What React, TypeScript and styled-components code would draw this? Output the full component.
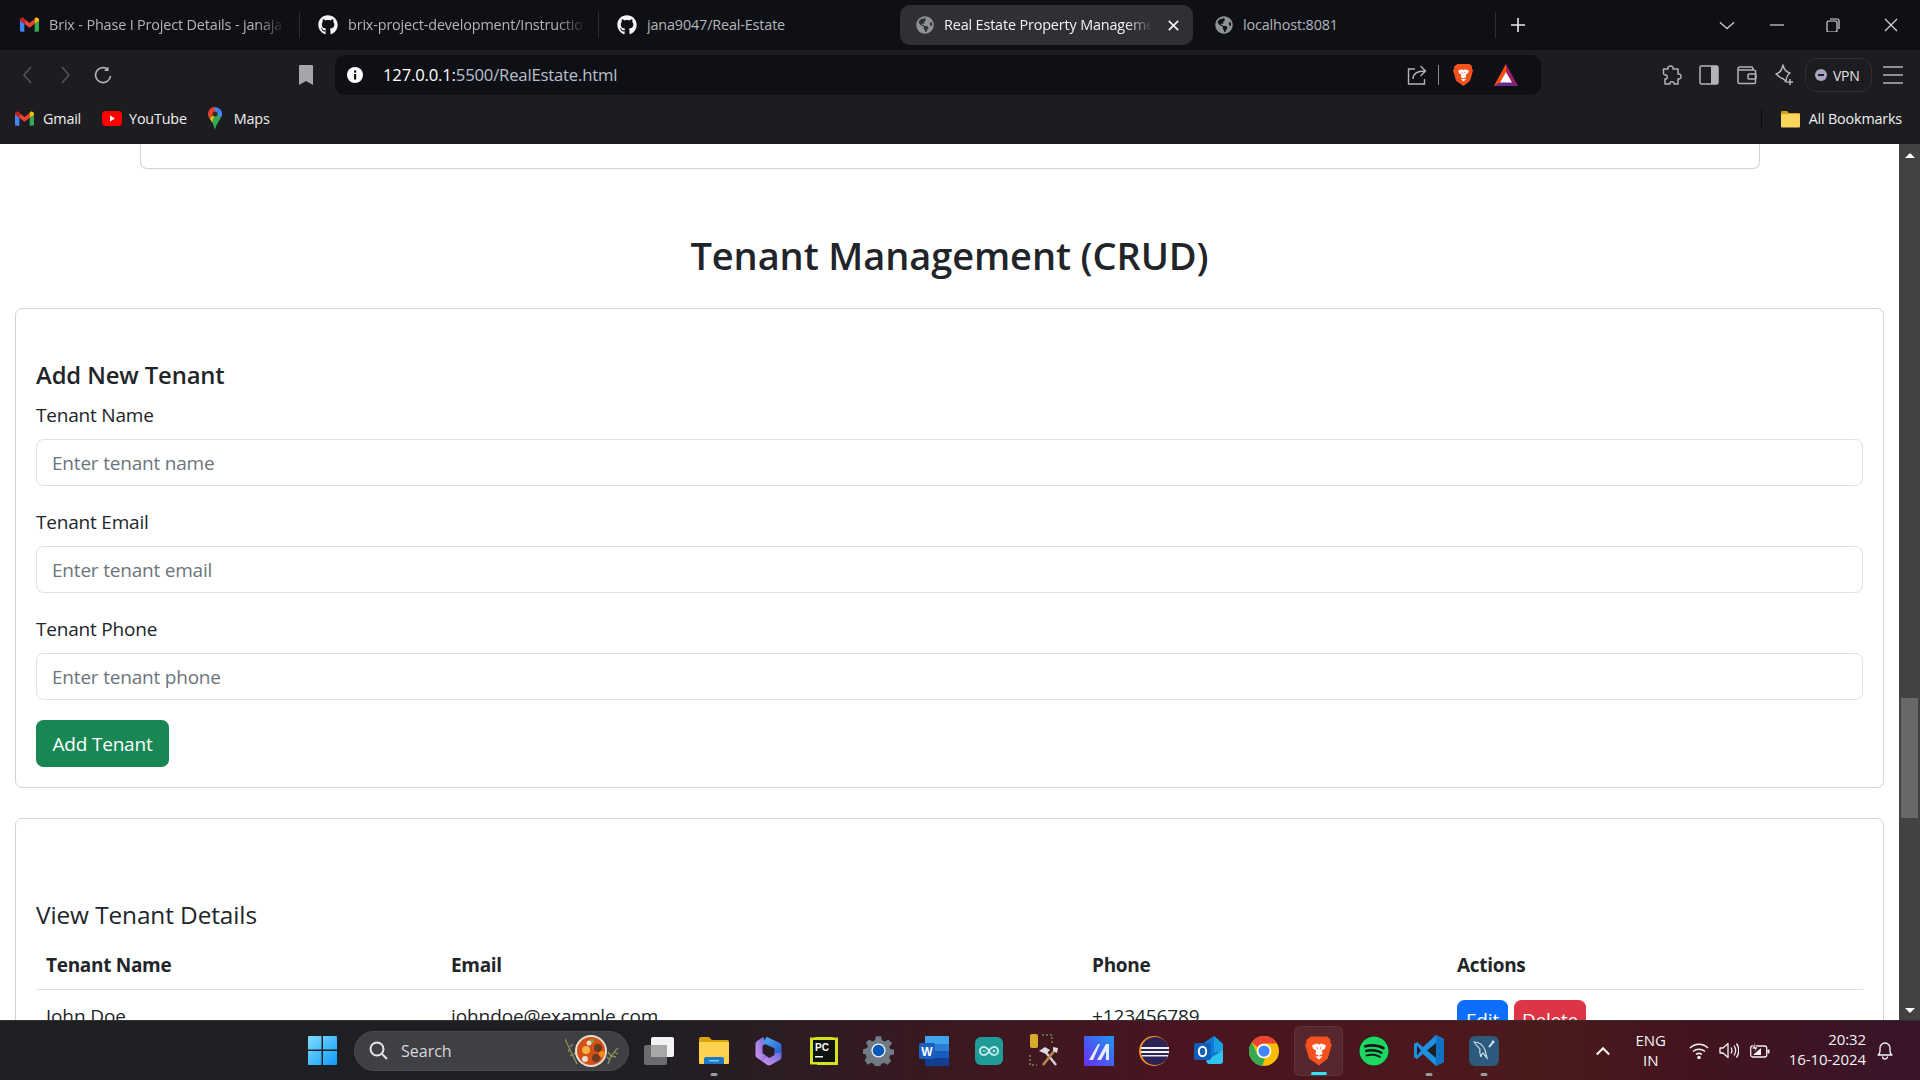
import React from "react";
import styled, { createGlobalStyle } from "styled-components";
import { FaGithub, FaGlobeAmericas, FaSpotify } from "react-icons/fa";
import { SiArduino } from "react-icons/si";

const UI_FONT = `"Open Sans", "Noto Sans", "Liberation Sans", sans-serif`;

const GlobalStyle = createGlobalStyle`
  * { box-sizing: border-box; }
  html, body { margin: 0; padding: 0; background: #fff; }
  body { font-family: ${UI_FONT}; overflow: hidden; }
`;

const Frame = styled.div`
  width: 1920px;
  height: 1080px;
  display: flex;
  flex-direction: column;
  overflow: hidden;
`;

/* browser chrome */
const TabStrip = styled.div`
  height: 50px;
  flex: none;
  background: #0f1015;
  display: flex;
  align-items: center;
  padding-left: 2px;
`;

const Tab = styled.div<{ $w: number; $active?: boolean; $divider?: boolean; $pad?: number }>`
  width: ${(p) => p.$w}px;
  height: ${(p) => (p.$active ? 40 : 26)}px;
  display: flex;
  align-items: center;
  gap: 10px;
  padding-left: ${(p) => p.$pad ?? 18}px;
  background: ${(p) => (p.$active ? "#2f2f34" : "transparent")};
  border-radius: ${(p) => (p.$active ? "10px" : "0")};
  border-right: ${(p) => (p.$divider ? "1px solid #2c2d31" : "none")};
  color: ${(p) => (p.$active ? "#f2f2f3" : "#b4b5b9")};
`;

const TabTitle = styled.span<{ $w: number; $fade?: boolean }>`
  width: ${(p) => p.$w}px;
  overflow: hidden;
  white-space: nowrap;
  font-size: 14.4px;
  line-height: 20px;
  margin-top: -1px;
  letter-spacing: -0.15px;
  ${(p) => (p.$fade ? "mask-image: linear-gradient(to right, #000 88%, transparent 100%);" : "")}
`;

const TabClose = styled.span`
  margin-left: 6px;
  display: flex;
  color: #f0f0f0;
`;

const NewTab = styled.div`
  margin-left: 15px;
  display: flex;
  color: #e8e8e8;
`;

const WindowControls = styled.div`
  margin-left: auto;
  display: flex;
  align-items: center;
  color: #d8d8d8;
`;

const WinButton = styled.div<{ $ml: number }>`
  margin-left: ${(p) => p.$ml}px;
  display: flex;
`;

const Toolbar = styled.div`
  height: 45px;
  flex: none;
  background: #1c1c21;
  display: flex;
  align-items: flex-end;
  color: #c0c0c4;
`;

const NavButton = styled.div<{ $ml: number }>`
  height: 40px;
  margin-left: ${(p) => p.$ml}px;
  display: flex;
  align-items: center;
`;

const AddressBar = styled.div`
  width: 1206px;
  height: 40px;
  margin-left: 22px;
  background: #0f1015;
  border-radius: 10px;
  display: flex;
  align-items: center;
  padding-left: 12px;
`;

const Url = styled.span`
  margin-left: 20px;
  margin-top: -1px;
  font-size: 16.7px;
  letter-spacing: -0.2px;
  color: #b9c0cc;
`;

const UrlHost = styled.span`
  color: #fff;
`;

const AddressActions = styled.div`
  margin-left: auto;
  display: flex;
  align-items: center;
  padding-right: 23px;
`;

const AddressDivider = styled.span`
  width: 1px;
  height: 20px;
  background: #8a8a8e;
  margin: 0 14px 0 11px;
`;

const VpnPill = styled.div`
  width: 67px;
  height: 34px;
  margin-left: 11px;
  margin-bottom: 3px;
  border: 1px solid #2f3036;
  border-radius: 12px;
  display: flex;
  align-items: center;
  gap: 6px;
  padding-left: 9px;
  font-size: 14px;
  letter-spacing: -0.3px;
  color: #e2e2e4;
`;

const VpnDot = styled.span`
  width: 12px;
  height: 12px;
  border-radius: 50%;
  background: #a3a6bd;
  display: flex;
  align-items: center;
  justify-content: center;
  &::after {
    content: "";
    width: 6px;
    height: 2px;
    background: #1c1c21;
  }
`;

const BookmarkBar = styled.div`
  height: 49px;
  flex: none;
  background: #1c1c21;
  display: flex;
  align-items: center;
  padding-bottom: 2px;
  color: #f0f0f0;
  font-size: 14.4px;
  letter-spacing: -0.2px;
`;

const Bookmark = styled.div<{ $ml: number; $gap: number }>`
  margin-left: ${(p) => p.$ml}px;
  display: flex;
  align-items: center;
  gap: ${(p) => p.$gap}px;
`;

const BookmarkDivider = styled.span`
  width: 1px;
  height: 20px;
  background: #0c0c0f;
  margin-left: auto;
`;

const BookmarkLabel = styled.span`
  margin-right: 18px;
`;

/* page */
const Viewport = styled.div`
  flex: 1;
  min-height: 0;
  display: flex;
  background: #fff;
  overflow: hidden;
`;

const PageContent = styled.main`
  width: 1899px;
  flex: none;
  overflow: hidden;
  color: #212529;
  font-size: 19px;
  letter-spacing: -0.2px;
`;

const PrevCard = styled.div`
  width: 1620px;
  height: 25px;
  margin-left: 140px;
  border: 1px solid #d3d3d3;
  border-top: none;
  border-radius: 0 0 7px 7px;
`;

const PageTitle = styled.h2`
  margin: 62px 0 29px;
  font-size: 38px;
  line-height: 48px;
  font-weight: 600;
  letter-spacing: -0.1px;
  text-align: center;
`;

const Card = styled.section<{ $mt?: number }>`
  margin: ${(p) => p.$mt ?? 0}px 15px 0;
  padding: 51px 20px 20px;
  border: 1px solid #d3d3d3;
  border-radius: 7px;
`;

const CardHeading = styled.h4<{ $weight: number; $size: number; $mt?: number; $mb: number }>`
  margin: ${(p) => p.$mt ?? 0}px 0 ${(p) => p.$mb}px;
  font-size: ${(p) => p.$size}px;
  line-height: 30px;
  font-weight: ${(p) => p.$weight};
  letter-spacing: -0.1px;
`;

const Field = styled.div`
  margin-bottom: 21px;
  &:last-of-type {
    margin-bottom: 20px;
  }
`;

const FieldLabel = styled.label`
  display: block;
  line-height: 30px;
  margin-bottom: 9px;
`;

const TextInput = styled.input`
  display: block;
  width: 100%;
  height: 47px;
  padding: 1px 15px 0;
  border: 1px solid #dee2e6;
  border-radius: 7.5px;
  font: inherit;
  letter-spacing: -0.2px;
  color: #212529;
  &::placeholder {
    color: #6c757d;
    opacity: 1;
  }
`;

const ActionButton = styled.button<{ $bg: string; $w: number; $h: number }>`
  width: ${(p) => p.$w}px;
  height: ${(p) => p.$h}px;
  padding: 1px 0 0;
  background: ${(p) => p.$bg};
  color: #fff;
  border: none;
  border-radius: 7.5px;
  font: inherit;
  letter-spacing: -0.2px;
`;

const TenantTable = styled.table`
  width: 100%;
  border-collapse: collapse;
  table-layout: fixed;
`;

const HeadCell = styled.th<{ $w?: number }>`
  width: ${(p) => (p.$w ? `${p.$w}px` : "auto")};
  height: 48px;
  padding: 0 10px;
  text-align: left;
  font-weight: 700;
  letter-spacing: -0.3px;
  border-bottom: 1px solid #dee2e6;
`;

const BodyCell = styled.td`
  padding: 11px 10px;
  line-height: 30px;
  vertical-align: top;
  white-space: nowrap;
  letter-spacing: -0.1px;
`;

const RowActions = styled.div`
  display: flex;
  gap: 6px;
  margin-top: -1px;
`;

const Scrollbar = styled.div`
  width: 21px;
  flex: none;
  background: #424242;
  display: flex;
  flex-direction: column;
  align-items: center;
  padding: 9px 0 7px;
`;

const ScrollArrow = styled.span<{ $down?: boolean }>`
  width: 0;
  height: 0;
  border-left: 5px solid transparent;
  border-right: 5px solid transparent;
  ${(p) => (p.$down ? "border-top: 5px solid #fff; margin-top: auto;" : "border-bottom: 5px solid #fff;")}
`;

const ScrollThumb = styled.div`
  width: 17px;
  height: 120px;
  margin-top: 540px;
  background: #686868;
`;

/* taskbar */
const Taskbar = styled.footer`
  height: 60px;
  flex: none;
  position: relative;
  display: flex;
  align-items: center;
  padding-left: 295px;
  border-top: 1px solid #33302f;
  background: linear-gradient(90deg, #1f2024 0%, #1e1f24 33%, #3c1820 50%, #4a1420 62%, #4b1a1b 80%, #43141f 88%, #38142a 100%);
  color: #f3f3f3;
`;

const TaskCell = styled.div<{ $active?: boolean; $dot?: string }>`
  position: relative;
  width: 55px;
  height: 50px;
  flex: none;
  display: flex;
  align-items: center;
  justify-content: center;
  border-radius: 6px;
  ${(p) => (p.$active ? "background: rgba(255,255,255,0.07); border: 1px solid rgba(255,255,255,0.06); width: 49px; margin: 0 3px;" : "")}
  &::after {
    content: "";
    display: ${(p) => (p.$dot ? "block" : "none")};
    position: absolute;
    bottom: 0;
    left: 50%;
    transform: translateX(-50%);
    width: ${(p) => (p.$active ? 16 : 7)}px;
    height: 3px;
    border-radius: 2px;
    background: ${(p) => p.$dot};
  }
`;

const SearchPill = styled.div`
  width: 275px;
  height: 40px;
  margin: 0 2px 0 4px;
  flex: none;
  border-radius: 20px;
  background: #3f4045;
  border: 1px solid #4a4b50;
  display: flex;
  align-items: center;
  padding-left: 14px;
  gap: 13px;
  font-size: 16px;
  color: #d8d8d8;
`;

const SearchArt = styled.div`
  margin-left: auto;
  margin-right: 8px;
  display: flex;
`;

const Tray = styled.div`
  position: absolute;
  right: 0;
  top: 0;
  height: 100%;
  display: flex;
  align-items: center;
`;

const LangBlock = styled.div`
  margin: -2px 0 0 25px;
  width: 30px;
  display: flex;
  flex-direction: column;
  align-items: center;
  font-size: 15px;
  line-height: 20px;
  letter-spacing: -0.1px;
`;

const TrayIcon = styled.div<{ $ml: number }>`
  margin-left: ${(p) => p.$ml}px;
  display: flex;
`;

const Clock = styled.div`
  margin: -3px 0 0 19px;
  text-align: right;
  font-size: 15px;
  line-height: 20px;
  letter-spacing: -0.1px;
  white-space: nowrap;
`;

const IconTile = styled.span<{ $bg: string; $w: number }>`
  width: ${(p) => p.$w}px;
  height: ${(p) => p.$w}px;
  border-radius: 6px;
  background: ${(p) => p.$bg};
  display: flex;
  align-items: center;
  justify-content: center;
`;

const SpotifyBadge = styled.span`
  width: 30px;
  height: 30px;
  border-radius: 50%;
  background: #15191a;
  display: flex;
`;

/* icons */
const GmailIcon = ({ size = 19 }: { size?: number }) => (
  <svg width={size} height={size * 0.8} viewBox="0 0 24 18">
    <path d="M0 3v13a2 2 0 0 0 2 2h3.5V8z" fill="#4285f4" />
    <path d="M24 3v13a2 2 0 0 1-2 2h-3.5V8z" fill="#34a853" />
    <path d="M5.5 8 12 13l6.500-5V2L12 7 5.500 2z" fill="#ea4335" />
    <path d="M0 3c0-2.500 3-3.800 5-2.300L5.500 2v6L0 4z" fill="#c5221f" />
    <path d="M24 3c0-2.500-3-3.800-5-2.300L18.500 2v6L24 4z" fill="#fbbc04" />
  </svg>
);

const YoutubeIcon = () => (
  <svg width="20" height="15" viewBox="0 0 20 15">
    <rect width="20" height="15" rx="4" fill="#f00" />
    <path d="M8 4.500 13 7.500 8 10.500z" fill="#fff" />
  </svg>
);

const MapsIcon = () => (
  <svg width="14" height="23" viewBox="0 0 14 23">
    <path d="M7 0a7 7 0 0 0-5.300 11.500L7 5z" fill="#ea4335" />
    <path d="M7 0a7 7 0 0 1 5.300 2.500L7 7z" fill="#4285f4" />
    <path d="M12.300 2.500a7 7 0 0 1 .500 8.500L7 7z" fill="#4285f4" />
    <path d="M1.700 11.500 7 5l5.800 6C10.500 14.500 8 18 7 23c-1-5-3.500-8.500-5.300-11.500z" fill="#34a853" />
    <path d="M1.700 11.500 7 7 4 15z" fill="#fbbc04" />
    <circle cx="7" cy="7" r="2.500" fill="#3a2c14" />
  </svg>
);

const ChevronIcon = ({ dir, color }: { dir: "left" | "right" | "down" | "up"; color: string }) => {
  const d = {
    left: "M9 1 2 9l7 8",
    right: "M2 1l7 8-7 8",
    down: "M1 5l8 7 8-7",
    up: "M2 12l7-7 7 7",
  }[dir];
  const narrow = dir === "left" || dir === "right";
  return (
    <svg width={narrow ? 11 : 16} height={narrow ? 18 : 16} viewBox={narrow ? "0 0 11 18" : "0 0 18 16"} fill="none" stroke={color} strokeWidth={dir === "up" ? 2.4 : 1.5}>
      <path d={d} />
    </svg>
  );
};

const ReloadIcon = () => (
  <svg width="20" height="20" viewBox="0 0 20 20" fill="none" stroke="#b6b6ba" strokeWidth="1.700">
    <path d="M17.500 11a7.500 7.500 0 1 1-3-7" />
    <path d="M15.500 1.500v4.500H11" fill="#b6b6ba" stroke="none" />
  </svg>
);

const BookmarkIcon = () => (
  <svg width="14" height="20" viewBox="0 0 14 20">
    <path d="M1 0h12a1 1 0 0 1 1 1v19l-7-4-7 4V1a1 1 0 0 1 1-1z" fill="#a6a6aa" />
  </svg>
);

const InfoIcon = () => (
  <svg width="16" height="16" viewBox="0 0 16 16">
    <circle cx="8" cy="8" r="8" fill="#fff" />
    <rect x="7" y="7" width="2.200" height="5.500" fill="#0f1015" />
    <rect x="7" y="3.500" width="2.200" height="2.200" fill="#0f1015" />
  </svg>
);

const ShareIcon = () => (
  <svg width="20" height="20" viewBox="0 0 20 20" fill="none" stroke="#b4b4b8" strokeWidth="1.400">
    <path d="M8 4H1.500v15h16v-5" />
    <path d="M6 14c0-5 3-8 12-8M13.500 1 18.500 6l-5 5" />
  </svg>
);

const BraveIcon = ({ size }: { size: number }) => (
  <svg width={size} height={size * 1.1} viewBox="0 0 24 26">
    <path d="M5 1h14l3 3-.500 2 1.500 2-3.500 12L12 26l-8.500-6L0 8l1.500-2L1 4z" fill="#f4511e" />
    <path d="M6 8.500 10.500 7 12 8.200 13.500 7 18 8.500l-1 3-2.500 1.500.500 3-3 1.500-3-1.500.500-3L7 11.500z" fill="#fff" />
    <path d="M9 18h6l-3 3z" fill="#fff" />
    <path d="M9.500 10.500h1.500v1.500zM14.500 10.500H13v1.500z" fill="#f4511e" />
  </svg>
);

const BatIcon = () => (
  <svg width="24" height="22" viewBox="0 0 24 22">
    <path d="M12 0 24 22H0z" fill="#9e1f63" />
    <path d="M12 0 0 22l6-3.500L12 8z" fill="#ff5000" />
    <path d="M0 22h24l-6-3.500H6z" fill="#662d91" />
    <path d="M12 8 6 18.500h12z" fill="#fff" />
  </svg>
);

const PuzzleIcon = () => (
  <svg width="20" height="22" viewBox="0 0 20 22" fill="none" stroke="#b4b4b8" strokeWidth="1.500">
    <path d="M6 5c-1-4 6-4 5 0h5v5c4-1 4 6 0 5v5h-4c1-3-5-3-4 0H3v-5c3 1 3-5 0-4l-1.500-1V5z" strokeLinejoin="round" />
  </svg>
);

const SidebarIcon = () => (
  <svg width="20" height="20" viewBox="0 0 20 20">
    <rect x="1" y="1" width="18" height="18" rx="1.500" fill="none" stroke="#b4b4b8" strokeWidth="1.500" />
    <rect x="12" y="1" width="7" height="18" fill="#b4b4b8" />
  </svg>
);

const WalletIcon = () => (
  <svg width="20" height="20" viewBox="0 0 20 20" fill="none" stroke="#b4b4b8" strokeWidth="1.500">
    <path d="M1 4a2 2 0 0 1 2-2h12l2 3H3a2 2 0 0 1-2-1zv13a1.500 1.500 0 0 0 1.500 1.500h15a1.500 1.500 0 0 0 1-1.500V5" />
    <rect x="11" y="9" width="8" height="5" rx="1" />
  </svg>
);

const SparkleIcon = () => (
  <svg width="20" height="22" viewBox="0 0 20 22" fill="none" stroke="#b4b4b8" strokeWidth="1.500">
    <path d="M9 1c1 5 3 7 7 8-3 2-4 4-4 9-2-3-3-4-5-4l-5-4c4-1 6-4 7-9z" strokeLinejoin="round" />
    <path d="M16 15v6M13 18h6" />
  </svg>
);

const MenuIcon = () => (
  <svg width="20" height="18" viewBox="0 0 20 18" stroke="#b4b4b8" strokeWidth="1.500">
    <path d="M0 1h20M0 9h20M0 17h20" />
  </svg>
);

const FolderIcon = () => (
  <svg width="19" height="18" viewBox="0 0 19 18">
    <path d="M0 2a1 1 0 0 1 1-1h5l2 2h10a1 1 0 0 1 1 1v12a1 1 0 0 1-1 1H1a1 1 0 0 1-1-1z" fill="#d59e12" />
    <rect y="4" width="19" height="13.500" rx="1" fill="#f9d65c" />
  </svg>
);

const WindowsLogo = () => (
  <svg width="29" height="29" viewBox="0 0 29 29">
    <defs>
      <linearGradient id="winGrad" x1="0" y1="0" x2="1" y2="1">
        <stop offset="0" stopColor="#7fdcff" />
        <stop offset="1" stopColor="#0f9bfb" />
      </linearGradient>
    </defs>
    <path d="M0 1a1 1 0 0 1 1-1h12.500v13.500H0zM15 0h13a1 1 0 0 1 1 1v12.500H15zM0 15h13.500v14H1a1 1 0 0 1-1-1zM15 15h14v13a1 1 0 0 1-1 1H15z" fill="url(#winGrad)" />
  </svg>
);

const SearchGlass = () => (
  <svg width="19" height="19" viewBox="0 0 19 19" fill="none" stroke="#e6e6e6" strokeWidth="2">
    <circle cx="8" cy="8" r="6.500" />
    <path d="M13 13l5 5" />
  </svg>
);

const FoodArt = () => (
  <svg width="55" height="34" viewBox="0 0 55 34">
    <g stroke="#8f9150" strokeWidth="1.300" fill="none">
      <path d="M12 30C8 22 4 14 0 5M5 14l-2 4M8 20l-3 2M5 13l3-3M9 21l2-4" />
      <path d="M43 30c2-6 5-12 10-16M46 22l-3-4M49 18l4 2M47 22l4 1M45 26l-3-3" />
    </g>
    <circle cx="26" cy="17" r="16" fill="#e9e1d2" />
    <circle cx="26" cy="17" r="14" fill="#d3501b" />
    <circle cx="21" cy="16" r="4" fill="#f3b33c" />
    <circle cx="33" cy="14" r="4" fill="#6c3a20" />
    <circle cx="31" cy="24" r="4" fill="#6c3a20" />
    <circle cx="20" cy="25" r="3" fill="#e7ded0" />
    <circle cx="27" cy="7" r="2" fill="#78a83a" />
    <circle cx="37" cy="20" r="3" fill="#f78b1f" />
    <circle cx="24" cy="9" r="2.500" fill="#e7ded0" />
  </svg>
);

const TaskViewIcon = () => (
  <svg width="30" height="28" viewBox="0 0 30 28">
    <rect y="8" width="23" height="20" rx="2" fill="#6c6c6e" />
    <rect x="7" y="0" width="23" height="20" rx="2" fill="#f3f3f3" />
    <rect x="7" y="8" width="16" height="12" fill="#a8a8aa" />
  </svg>
);

const ExplorerIcon = () => (
  <svg width="30" height="27" viewBox="0 0 30 27">
    <path d="M0 2a2 2 0 0 1 2-2h8l3 3h15a2 2 0 0 1 2 2v3H0z" fill="#d9a40c" />
    <rect y="5" width="30" height="22" rx="1" fill="#fbd34e" />
    <path d="M5 27v-5a2 2 0 0 1 2-2h16a2 2 0 0 1 2 2v5z" fill="#1a78c9" />
    <rect x="10" y="23" width="10" height="1.500" fill="#7fc6f3" />
  </svg>
);

const CopilotIcon = () => (
  <svg width="27" height="30" viewBox="0 0 27 30" fill="none" strokeWidth="7" strokeLinejoin="round">
    <defs>
      <linearGradient id="copBlue" x1="0" y1="0" x2="1" y2="1">
        <stop offset="0" stopColor="#4aa3ea" />
        <stop offset="1" stopColor="#2f62d6" />
      </linearGradient>
      <linearGradient id="copPurple" x1="0" y1="1" x2="1" y2="0">
        <stop offset="0" stopColor="#c58be8" />
        <stop offset="1" stopColor="#6e6ee2" />
      </linearGradient>
    </defs>
    <path d="M10 4 4 8v11l5 3.500" stroke="url(#copPurple)" />
    <path d="M9 22.500 14 26l9-5V16" stroke="url(#copPurple)" />
    <path d="M10 4l13 6v7" stroke="url(#copBlue)" />
  </svg>
);

const PyCharmIcon = () => (
  <svg width="28" height="28" viewBox="0 0 28 28">
    <rect width="28" height="28" fill="#d4e21f" />
    <path d="M0 0h5M23 0h5M0 28h7" stroke="#111" strokeWidth="1" />
    <rect x="3" y="3" width="22" height="22" fill="#0d1410" />
    <text x="5" y="14" fontSize="10" fontWeight="700" fontFamily="Liberation Sans, sans-serif" fill="#fff">PC</text>
    <rect x="5" y="19" width="8" height="1.500" fill="#fff" />
  </svg>
);

const GearIcon = () => (
  <svg width="31" height="31" viewBox="0 0 24 24">
    <path d="M10 1h4l.7 3 2.300 1 2.700-1.500 2.800 2.800L20.300 9l.7 1.800 3 .7v3.500l-3 .7-.7 1.800 1.500 2.700-2.800 2.800-2.700-1.500-2.300 1-.7 2.500h-4l-.7-2.500-2.300-1-2.700 1.500L1.300 19.500 2.800 16.800 2 15l-2-.5v-3.500l3-.7.7-1.800-1.500-2.700L5 3.500 7 5l2.300-1z" fill="#6f7a85" />
    <circle cx="12" cy="12" r="5.500" fill="#f2f2f2" />
    <circle cx="12" cy="12" r="4.500" fill="#0a58b5" />
  </svg>
);

const WordIcon = () => (
  <svg width="30" height="30" viewBox="0 0 30 30">
    <rect x="6" width="24" height="30" rx="2" fill="#2b7cd3" />
    <rect x="6" y="0" width="24" height="8" fill="#41a5ee" />
    <rect x="6" y="15" width="24" height="8" fill="#185abd" />
    <rect x="6" y="22" width="24" height="8" fill="#103f91" />
    <rect y="7" width="16" height="16" rx="2" fill="#1a5fbf" />
    <text x="8" y="20" textAnchor="middle" fontSize="12" fontWeight="700" fontFamily="Liberation Sans, sans-serif" fill="#fff">W</text>
  </svg>
);

const ToolsIcon = () => (
  <svg width="30" height="33" viewBox="0 0 30 33">
    <rect x="1" y="0" width="8" height="14" rx="2" fill="#d8ab2d" />
    <path d="M13 1h10v9M1 21v10h7" fill="none" stroke="#6c8e4a" strokeWidth="1.500" strokeDasharray="2 2" />
    <path d="M15 16l12 15" stroke="#cfcfcf" strokeWidth="2.500" />
    <path d="M26 16 14 31" stroke="#b98a4a" strokeWidth="2.500" />
    <path d="M10 17l6-4 5 3-4 4zM24 13l5 1-1 5-4-2z" fill="#dcdcdc" />
  </svg>
);

const MathIcon = () => (
  <svg width="30" height="30" viewBox="0 0 30 30">
    <defs>
      <linearGradient id="mathGrad" x1="0" y1="1" x2="1" y2="0">
        <stop offset="0" stopColor="#6a2cf2" />
        <stop offset="1" stopColor="#1e96f0" />
      </linearGradient>
    </defs>
    <rect width="30" height="30" fill="url(#mathGrad)" />
    <path d="M5 24 14 8h2L9 24zM13 24l9-16h3v16h-3v-9l-5 9z" fill="#e8ecff" />
  </svg>
);

const EclipseIcon = () => (
  <svg width="30" height="30" viewBox="0 0 30 30">
    <circle cx="15" cy="15" r="15" fill="#f7941e" />
    <circle cx="16" cy="15" r="14" fill="#2c2255" />
    <rect x="2" y="11" width="28" height="2" fill="#f2f2f6" />
    <rect x="2" y="15" width="28" height="2" fill="#f2f2f6" />
    <rect x="3" y="19" width="26" height="1.500" fill="#e8e8ef" />
  </svg>
);

const OutlookIcon = () => (
  <svg width="30" height="30" viewBox="0 0 30 30">
    <path d="M8 8 20 0l9 8v15H8z" fill="#0f78d4" />
    <path d="M20 0l9 8v8h-9z" fill="#1b9de2" />
    <path d="M12 25 29 14v11a3 3 0 0 1-3 3H14z" fill="#2fc2ee" />
    <rect y="7" width="17" height="17" rx="2" fill="#0f5fb8" />
    <ellipse cx="8.500" cy="15.500" rx="3.700" ry="4.700" fill="none" stroke="#fff" strokeWidth="2" />
  </svg>
);

const ChromeIcon = () => (
  <svg width="30" height="30" viewBox="0 0 24 24">
    <circle cx="12" cy="12" r="12" fill="#fbbc04" />
    <path d="M12 0a12 12 0 0 1 10.400 6H12a6 6 0 0 0-5.200 3L2.300 4.900A12 12 0 0 1 12 0z" fill="#ea4335" />
    <path d="M2.300 4.900 6.800 15a6 6 0 0 0 6 3l-2.400 5.900A12 12 0 0 1 2.300 4.900z" fill="#34a853" />
    <circle cx="12" cy="12" r="5.800" fill="#fff" />
    <circle cx="12" cy="12" r="4.500" fill="#4285f4" />
  </svg>
);

const VscodeIcon = () => (
  <svg width="30" height="31" viewBox="0 0 30 31">
    <path d="M22 0 30 4v23l-8 4-13-12-6 5-3-2v-13l3-2 6 5z" fill="#1f8fe0" />
    <path d="M22 8v15l-9-7.500z" fill="#202024" />
    <path d="M3 10.500 7 15.500l-4 5z" fill="#202024" />
    <path d="M22 0l8 4v23l-8 4z" fill="#0f72c2" />
  </svg>
);

const WorkbenchIcon = () => (
  <IconTile $bg="#2b5a7c" $w={30}>
    <svg width="24" height="24" viewBox="0 0 24 24" fill="none" stroke="#c9dbe6" strokeWidth="1.200">
      <path d="M2 3c5 0 9 3 11 8l2 8c-2-2-3-4-4-5-1 1-2 2-2 4-1-3-2-5-1-8C6 8 4 6 2 3z" />
      <path d="M17 8l5-6M20 2l2 2" strokeWidth="2" />
    </svg>
  </IconTile>
);

const CloseGlyph = ({ size, color = "currentColor", w = 1.500 }: { size: number; color?: string; w?: number }) => (
  <svg width={size} height={size} viewBox="0 0 14 14" stroke={color} strokeWidth={w}>
    <path d="M1 1l12 12M13 1 1 13" />
  </svg>
);

const PlusGlyph = () => (
  <svg width="14" height="14" viewBox="0 0 14 14" stroke="currentColor" strokeWidth="1.600">
    <path d="M7 0v14M0 7h14" />
  </svg>
);

const MinimizeGlyph = () => (
  <svg width="14" height="14" viewBox="0 0 14 14" stroke="currentColor" strokeWidth="1.200">
    <path d="M0 7h14" />
  </svg>
);

const RestoreGlyph = () => (
  <svg width="14" height="14" viewBox="0 0 14 14" fill="none" stroke="currentColor" strokeWidth="1.200">
    <rect x="1" y="3" width="10" height="11" rx="1.500" />
    <path d="M4 1h7a2 2 0 0 1 2 2v8" />
  </svg>
);

const WifiIcon = () => (
  <svg width="20" height="17" viewBox="0 0 20 17" fill="none" stroke="#f3f3f3" strokeWidth="1.500">
    <path d="M1 6c5-5 13-5 18 0M4 9.500c3.500-3 8.500-3 12 0M7 12.500c2-1.500 4-1.500 6 0" />
    <circle cx="10" cy="15.500" r="1" fill="#f3f3f3" />
  </svg>
);

const SpeakerIcon = () => (
  <svg width="20" height="17" viewBox="0 0 20 17" fill="none" stroke="#f3f3f3" strokeWidth="1.300">
    <path d="M1 6v5h3l5 4.500V1.500L4 6z" strokeLinejoin="round" />
    <path d="M12 5.500c1.300 2 1.300 4 0 6M15 3.500c2 3 2 7 0 10M17.500 1.500c3 4 3 10 0 14" />
  </svg>
);

const BatteryIcon = () => (
  <svg width="20" height="17" viewBox="0 0 20 17">
    <rect x=".7" y="4" width="16" height="11" rx="2" fill="none" stroke="#f3f3f3" strokeWidth="1.300" />
    <rect x="17.500" y="7.500" width="2" height="4" rx=".7" fill="#f3f3f3" />
    <path d="M3 13 11 6v7z" fill="#f3f3f3" />
    <path d="M5 0 2 7h3L4 11l4-6H5z" fill="#f3f3f3" stroke="#3e1420" strokeWidth=".7" />
  </svg>
);

const BellIcon = () => (
  <svg width="16" height="19" viewBox="0 0 16 19" fill="none" stroke="#f3f3f3" strokeWidth="1.300">
    <path d="M1 14c1.500-1 2-2 2-4V7a5 5 0 0 1 10 0v3c0 2 .500 3 2 4z" strokeLinejoin="round" />
    <path d="M5.500 15.500a2.500 2.500 0 0 0 5 0" />
  </svg>
);

const GlobeFavicon = () => <FaGlobeAmericas size={18} color="#8e9196" />;
const GithubFavicon = () => <FaGithub size={20} color="#f5f5f5" />;

const tasks: { icon: React.ReactNode; dot?: string; active?: boolean }[] = [
  { icon: <TaskViewIcon /> },
  { icon: <ExplorerIcon />, dot: "#9a9a9c" },
  { icon: <CopilotIcon /> },
  { icon: <PyCharmIcon /> },
  { icon: <GearIcon /> },
  { icon: <WordIcon /> },
  { icon: <IconTile $bg="#1f9c98" $w={28}><SiArduino size={20} color="#cdeeee" /></IconTile> },
  { icon: <ToolsIcon /> },
  { icon: <MathIcon /> },
  { icon: <EclipseIcon /> },
  { icon: <OutlookIcon /> },
  { icon: <ChromeIcon /> },
  { icon: <BraveIcon size={28} />, dot: "#2ee6f2", active: true },
  { icon: <SpotifyBadge><FaSpotify size={30} color="#1ed760" /></SpotifyBadge> },
  { icon: <VscodeIcon />, dot: "#9a9a9c" },
  { icon: <WorkbenchIcon />, dot: "#9a9a9c" },
];

export default function App() {
  return (
    <>
      <GlobalStyle />
      <Frame>
        <TabStrip>
          <Tab $w={298} $divider>
            <GmailIcon />
            <TabTitle $w={236} $fade>Brix - Phase I Project Details - janaja</TabTitle>
          </Tab>
          <Tab $w={299} $divider>
            <GithubFavicon />
            <TabTitle $w={238} $fade>brix-project-development/Instructio</TabTitle>
          </Tab>
          <Tab $w={301}>
            <GithubFavicon />
            <TabTitle $w={200}>jana9047/Real-Estate</TabTitle>
          </Tab>
          <Tab $w={293} $active $pad={16}>
            <GlobeFavicon />
            <TabTitle $w={208} $fade>Real Estate Property Manageme</TabTitle>
            <TabClose><CloseGlyph size={11} w={2.200} /></TabClose>
          </Tab>
          <Tab $w={303} $divider $pad={22}>
            <GlobeFavicon />
            <TabTitle $w={150}>localhost:8081</TabTitle>
          </Tab>
          <NewTab><PlusGlyph /></NewTab>
          <WindowControls>
            <WinButton $ml={0}><ChevronIcon dir="down" color="#c8c8cc" /></WinButton>
            <WinButton $ml={35}><MinimizeGlyph /></WinButton>
            <WinButton $ml={42}><RestoreGlyph /></WinButton>
            <WinButton $ml={44}><CloseGlyph size={14} w={1.200} /></WinButton>
            <WinButton $ml={22} />
          </WindowControls>
        </TabStrip>

        <Toolbar>
          <NavButton $ml={22}><ChevronIcon dir="left" color="#55555a" /></NavButton>
          <NavButton $ml={27}><ChevronIcon dir="right" color="#55555a" /></NavButton>
          <NavButton $ml={22}><ReloadIcon /></NavButton>
          <NavButton $ml={186}><BookmarkIcon /></NavButton>
          <AddressBar>
            <InfoIcon />
            <Url><UrlHost>127.0.0.1:</UrlHost>5500/RealEstate.html</Url>
            <AddressActions>
              <ShareIcon />
              <AddressDivider />
              <BraveIcon size={21} />
              <TrayIcon $ml={20}><BatIcon /></TrayIcon>
            </AddressActions>
          </AddressBar>
          <NavButton $ml={121}><PuzzleIcon /></NavButton>
          <NavButton $ml={17}><SidebarIcon /></NavButton>
          <NavButton $ml={18}><WalletIcon /></NavButton>
          <NavButton $ml={17}><SparkleIcon /></NavButton>
          <VpnPill><VpnDot />VPN</VpnPill>
          <NavButton $ml={11}><MenuIcon /></NavButton>
        </Toolbar>

        <BookmarkBar>
          <Bookmark $ml={15} $gap={9}><GmailIcon />Gmail</Bookmark>
          <Bookmark $ml={21} $gap={7}><YoutubeIcon />YouTube</Bookmark>
          <Bookmark $ml={21} $gap={12}><MapsIcon />Maps</Bookmark>
          <BookmarkDivider />
          <Bookmark $ml={19} $gap={9}><FolderIcon /><BookmarkLabel>All Bookmarks</BookmarkLabel></Bookmark>
        </BookmarkBar>

        <Viewport>
          <PageContent>
            <PrevCard />
            <PageTitle>Tenant Management (CRUD)</PageTitle>
            <Card>
              <CardHeading $weight={600} $size={23.8} $mb={10}>Add New Tenant</CardHeading>
              <Field>
                <FieldLabel>Tenant Name</FieldLabel>
                <TextInput placeholder="Enter tenant name" />
              </Field>
              <Field>
                <FieldLabel>Tenant Email</FieldLabel>
                <TextInput placeholder="Enter tenant email" />
              </Field>
              <Field>
                <FieldLabel>Tenant Phone</FieldLabel>
                <TextInput placeholder="Enter tenant phone" />
              </Field>
              <ActionButton $bg="#198754" $w={133} $h={47}>Add Tenant</ActionButton>
            </Card>
            <Card $mt={30}>
              <CardHeading $weight={400} $size={24.4} $mt={30} $mb={11}>View Tenant Details</CardHeading>
              <TenantTable>
                <thead>
                  <tr>
                    <HeadCell $w={405}>Tenant Name</HeadCell>
                    <HeadCell $w={641}>Email</HeadCell>
                    <HeadCell $w={365}>Phone</HeadCell>
                    <HeadCell>Actions</HeadCell>
                  </tr>
                </thead>
                <tbody>
                  <tr>
                    <BodyCell>John Doe</BodyCell>
                    <BodyCell>johndoe@example.com</BodyCell>
                    <BodyCell>+123456789</BodyCell>
                    <BodyCell>
                      <RowActions>
                        <ActionButton $bg="#0d6efd" $w={51} $h={40}>Edit</ActionButton>
                        <ActionButton $bg="#dc3545" $w={72} $h={40}>Delete</ActionButton>
                      </RowActions>
                    </BodyCell>
                  </tr>
                </tbody>
              </TenantTable>
            </Card>
          </PageContent>
          <Scrollbar>
            <ScrollArrow />
            <ScrollThumb />
            <ScrollArrow $down />
          </Scrollbar>
        </Viewport>

        <Taskbar>
          <TaskCell><WindowsLogo /></TaskCell>
          <SearchPill>
            <SearchGlass />
            Search
            <SearchArt><FoodArt /></SearchArt>
          </SearchPill>
          {tasks.map((t, i) => (
            <TaskCell key={i} $active={t.active} $dot={t.dot}>{t.icon}</TaskCell>
          ))}
          <Tray>
            <TrayIcon $ml={0}><ChevronIcon dir="up" color="#f3f3f3" /></TrayIcon>
            <LangBlock><span>ENG</span><span>IN</span></LangBlock>
            <TrayIcon $ml={23}><WifiIcon /></TrayIcon>
            <TrayIcon $ml={10}><SpeakerIcon /></TrayIcon>
            <TrayIcon $ml={11}><BatteryIcon /></TrayIcon>
            <Clock>20:32<br />16-10-2024</Clock>
            <TrayIcon $ml={11}><BellIcon /></TrayIcon>
            <TrayIcon $ml={27} />
          </Tray>
        </Taskbar>
      </Frame>
    </>
  );
}
